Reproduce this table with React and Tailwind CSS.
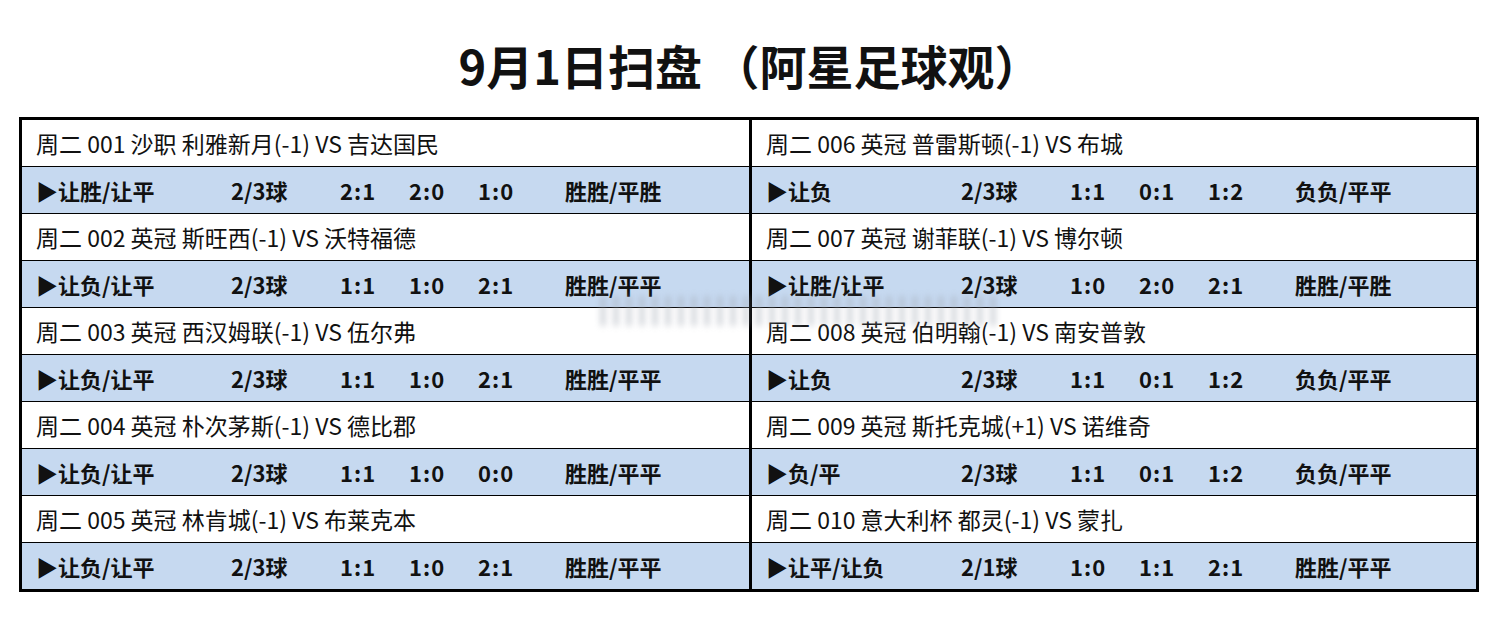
const left = [
  { head: '周二 001 沙职 利雅新月(-1) VS 吉达国民', pick: '▶让胜/让平', goals: '2/3球', scores: ['2:1', '2:0', '1:0'], half: '胜胜/平胜' },
  { head: '周二 002 英冠 斯旺西(-1) VS 沃特福德', pick: '▶让负/让平', goals: '2/3球', scores: ['1:1', '1:0', '2:1'], half: '胜胜/平平' },
  { head: '周二 003 英冠 西汉姆联(-1) VS 伍尔弗', pick: '▶让负/让平', goals: '2/3球', scores: ['1:1', '1:0', '2:1'], half: '胜胜/平平' },
  { head: '周二 004 英冠 朴次茅斯(-1) VS 德比郡', pick: '▶让负/让平', goals: '2/3球', scores: ['1:1', '1:0', '0:0'], half: '胜胜/平平' },
  { head: '周二 005 英冠 林肯城(-1) VS 布莱克本', pick: '▶让负/让平', goals: '2/3球', scores: ['1:1', '1:0', '2:1'], half: '胜胜/平平' },
]

const right = [
  { head: '周二 006 英冠 普雷斯顿(-1) VS 布城', pick: '▶让负', goals: '2/3球', scores: ['1:1', '0:1', '1:2'], half: '负负/平平' },
  { head: '周二 007 英冠 谢菲联(-1) VS 博尔顿', pick: '▶让胜/让平', goals: '2/3球', scores: ['1:0', '2:0', '2:1'], half: '胜胜/平胜' },
  { head: '周二 008 英冠 伯明翰(-1) VS 南安普敦', pick: '▶让负', goals: '2/3球', scores: ['1:1', '0:1', '1:2'], half: '负负/平平' },
  { head: '周二 009 英冠 斯托克城(+1) VS 诺维奇', pick: '▶负/平', goals: '2/3球', scores: ['1:1', '0:1', '1:2'], half: '负负/平平' },
  { head: '周二 010 意大利杯 都灵(-1) VS 蒙扎', pick: '▶让平/让负', goals: '2/1球', scores: ['1:0', '1:1', '2:1'], half: '胜胜/平平' },
]

function Match({ m, last }) {
  return (
    <>
      <div className="h-[47px] border-b border-black bg-white flex items-center pl-[14px] text-[23px] text-[#111]">
        {m.head}
      </div>
      <div className={`${last ? 'h-[46px]' : 'h-[47px] border-b border-black'} bg-[#c6d9f0] flex items-center pl-[14px] text-[22px] font-bold text-[#111]`}>
        <span className="w-[195px]">{m.pick}</span>
        <span className="w-[109px]">{m.goals}</span>
        <span className="w-[69px] tracking-[1px]">{m.scores[0]}</span>
        <span className="w-[69px] tracking-[1px]">{m.scores[1]}</span>
        <span className="w-[87px] tracking-[1px]">{m.scores[2]}</span>
        <span>{m.half}</span>
      </div>
    </>
  )
}

export default function App() {
  return (
    <div className="w-[1500px] h-[617px] bg-white relative" style={{ fontFamily: '"Noto Sans CJK SC", "Noto Sans", sans-serif' }}>
      <div className="h-[117px] flex items-center justify-center pt-[12px]">
        <h1 className="text-[47px] font-bold text-[#111] leading-none">9月1日扫盘 （阿星足球观）</h1>
      </div>

      <div className="ml-[19px] w-[1460px] border-[3px] border-black flex">
        <div className="w-[727px] flex flex-col">
          {left.map((m, i) => <Match key={i} m={m} last={i === left.length - 1} />)}
        </div>
        <div className="flex-1 border-l-[3px] border-black flex flex-col">
          {right.map((m, i) => <Match key={i} m={m} last={i === right.length - 1} />)}
        </div>
      </div>

      {/* blurred smear over the middle */}
      <div className="absolute left-[592px] top-[296px] w-[410px] h-[30px] blur-[3px] opacity-60 pointer-events-none bg-[repeating-linear-gradient(90deg,transparent_0px,transparent_9px,#9ca3af_9px,#9ca3af_13px)]" />
    </div>
  )
}
